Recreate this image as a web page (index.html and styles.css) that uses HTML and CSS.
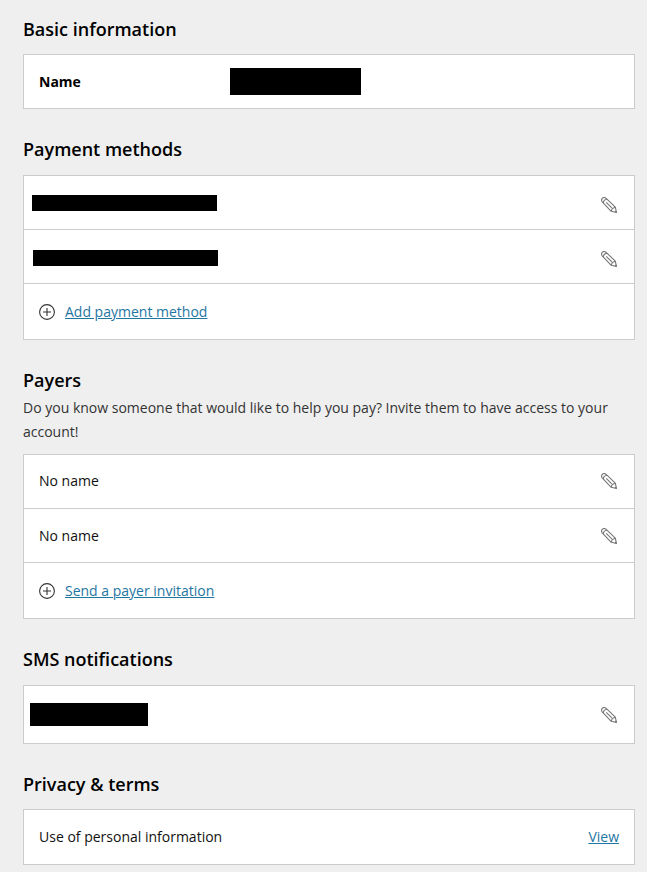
FILE: index.html
```html
<!DOCTYPE html>
<html lang="en">
<head>
    <meta charset="UTF-8">
    <meta name="viewport" content="width=device-width, initial-scale=1.0">
    <title>Account settings</title>
    <link rel="stylesheet" href="styles.css">
</head>
<body>

    <!-- Shared icons -->
    <svg class="icon-defs" width="0" height="0">
        <symbol id="icon-pencil" viewBox="0 0 16 16">
            <path d="M1.2 4.9 C0.3 3.7 0.4 2.4 1.3 1.4 C2.3 0.4 3.7 0.3 4.9 1.2 L14.3 10.2 L15.5 15.5 L10.2 14.3 Z"/>
            <path d="M2.3 6 C2.4 4 3.8 2.5 6 2.3 M10.2 14.3 L11.3 11.4 L14.3 10.2 M5.2 5.3 L10.8 10.8 M14 15 L15.2 13.9"/>
        </symbol>
        <symbol id="icon-plus" viewBox="0 0 16 16">
            <circle cx="8" cy="8" r="7.4"/>
            <path d="M4 8 H12 M8 4 V12"/>
        </symbol>
    </svg>

    <main class="container">
        <section class="section">
            <h2>Basic information</h2>
            <div class="card">
                <div class="row">
                    <span class="label">Name</span>
                    <span class="redacted redacted-name"></span>
                </div>
            </div>
        </section>

        <section class="section">
            <h2>Payment methods</h2>
            <div class="card">
                <div class="row row-method">
                    <span class="redacted redacted-method"></span>
                    <svg class="icon-pencil"><use href="#icon-pencil"/></svg>
                </div>
                <div class="row row-method row-method-second">
                    <span class="redacted redacted-method"></span>
                    <svg class="icon-pencil"><use href="#icon-pencil"/></svg>
                </div>
                <div class="row row-action">
                    <svg class="icon-plus"><use href="#icon-plus"/></svg>
                    <a href="#">Add payment method</a>
                </div>
            </div>
        </section>

        <section class="section">
            <h2 class="with-intro">Payers</h2>
            <p class="intro">Do you know someone that would like to help you pay? Invite them to have access to your account!</p>
            <div class="card">
                <div class="row row-payer">
                    <span>No name</span>
                    <svg class="icon-pencil"><use href="#icon-pencil"/></svg>
                </div>
                <div class="row row-payer-second">
                    <span>No name</span>
                    <svg class="icon-pencil"><use href="#icon-pencil"/></svg>
                </div>
                <div class="row row-action">
                    <svg class="icon-plus"><use href="#icon-plus"/></svg>
                    <a href="#">Send a payer invitation</a>
                </div>
            </div>
        </section>

        <section class="section">
            <h2>SMS notifications</h2>
            <div class="card">
                <div class="row row-sms">
                    <span class="redacted redacted-phone"></span>
                    <svg class="icon-pencil"><use href="#icon-pencil"/></svg>
                </div>
            </div>
        </section>

        <section class="section">
            <h2 class="privacy-title">Privacy &amp; terms</h2>
            <div class="card">
                <div class="row row-privacy">
                    <span>Use of personal information</span>
                    <a class="view-link" href="#">View</a>
                </div>
            </div>
        </section>
    </main>

</body>
</html>
```

FILE: styles.css
```css
:root {
    --background: #efefef;
    --border: #cccccc;
    --link: #1f76a3;
    --text: #111111;
    --white: #ffffff;
}

* {
    box-sizing: border-box;
}

body {
    margin: 0;
    font-family: "Open Sans", "Noto Sans", sans-serif;
    font-size: 14px;
    line-height: 24px;
    color: var(--text);
    background-color: var(--background);
}

.icon-defs {
    display: none;
}

.container {
    padding: 17px 12px 0 23px;
}

.section {
    margin-bottom: 28px;
}

.section:last-child {
    margin-bottom: 0;
}

h2 {
    margin: 0 0 14px;
    font-size: 18px;
    font-weight: 600;
    line-height: 24px;
    color: #000000;
}

.section:first-child h2,
.privacy-title {
    margin-bottom: 13px;
}

h2.with-intro {
    margin-bottom: 4px;
}

.intro {
    margin: 0 0 10px;
    color: #333333;
}

.card {
    background-color: var(--white);
    border: 1px solid var(--border);
}

.row {
    display: flex;
    align-items: center;
    height: 53px;
    padding: 0 17px 0 15px;
}

.row + .row {
    height: 54px;
    border-top: 1px solid var(--border);
}

.row + .row-action {
    height: 56px;
    gap: 10px;
}

.row-method {
    padding: 4px 17px 0 8px;
}

.row-method-second {
    padding: 5px 17px 0 9px;
}

.row-method-second .redacted {
    margin-top: -3px;
}

.row-payer {
    padding-bottom: 1px;
}

.row-payer-second {
    padding-top: 1px;
}

.row-sms {
    height: 57px;
    padding-left: 6px;
}

.row-privacy {
    height: 54px;
    padding-right: 15px;
}

.label {
    width: 191px;
    font-weight: 700;
    color: #000000;
}

/* Blacked out personal data */
.redacted {
    background-color: #000000;
}

.redacted-name {
    width: 131px;
    height: 27px;
}

.redacted-method {
    width: 185px;
    height: 16px;
    margin-top: -4px;
}

.redacted-phone {
    width: 118px;
    height: 23px;
}

a {
    color: var(--link);
    text-decoration: underline;
}

.view-link {
    margin-left: auto;
}

.icon-pencil {
    width: 16px;
    height: 16px;
    margin-left: auto;
    fill: none;
    stroke: #777777;
    stroke-width: 1.1;
    stroke-linejoin: round;
}

.icon-plus {
    width: 16px;
    height: 16px;
    margin-top: 1px;
    fill: none;
    stroke: #333333;
    stroke-width: 1.1;
}
```
